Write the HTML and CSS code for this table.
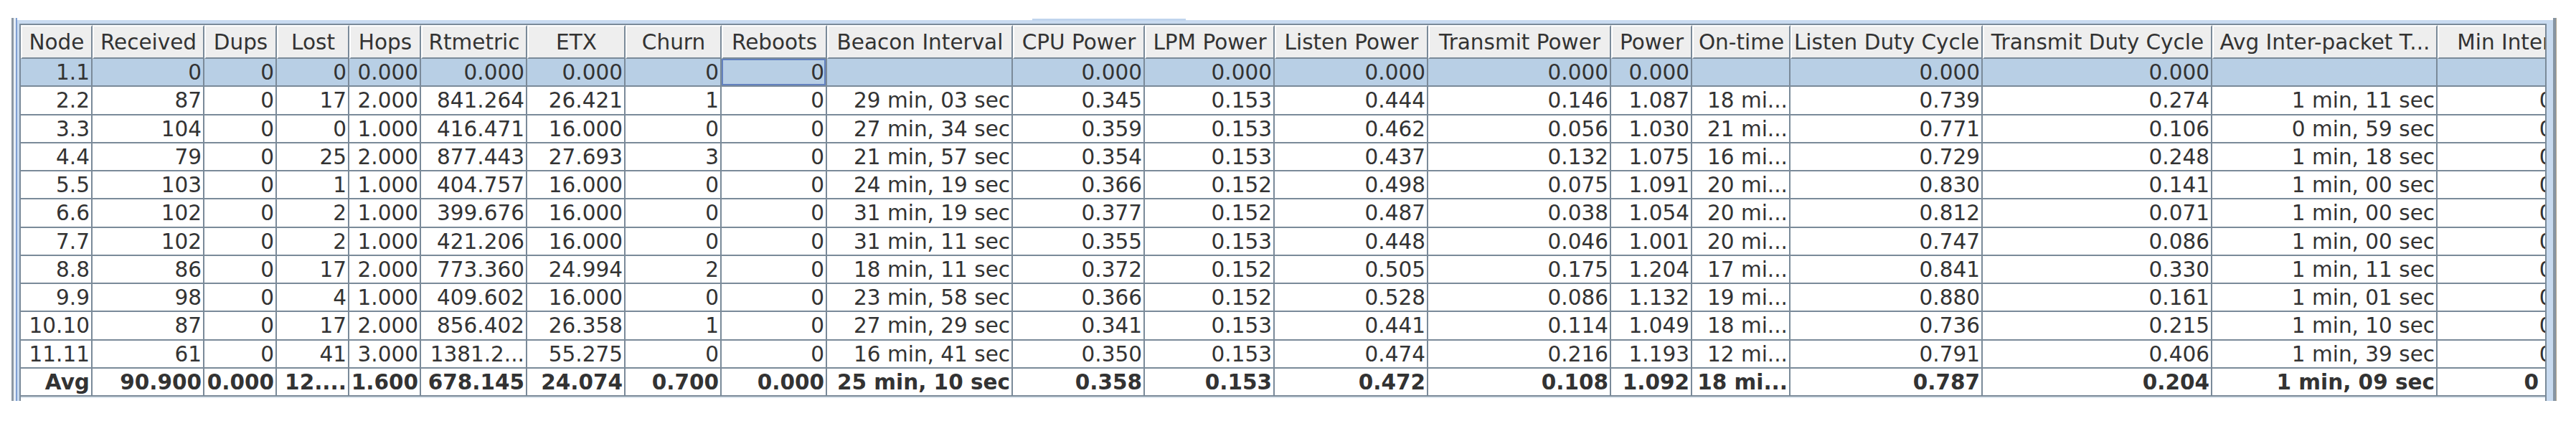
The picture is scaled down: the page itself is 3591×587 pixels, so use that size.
FILE: index.html
```html
<!DOCTYPE html>
<html>
<head>
<meta charset="utf-8">
<title>Node statistics</title>
<link rel="stylesheet" href="styles.css">
</head>
<body>
<div class="frame">
  <div class="edge-grey"></div>
  <div class="edge-light"></div>
  <div class="edge-blue"></div>
  <div class="inner">
    <div class="band"><div class="band-mark"></div></div>
    <div class="body-row">
      <div class="scroll">
        <div class="grid">
          <div class="row head">
            <div class="h">Node</div><div class="h">Received</div><div class="h">Dups</div><div class="h">Lost</div><div class="h">Hops</div><div class="h">Rtmetric</div><div class="h">ETX</div><div class="h">Churn</div><div class="h">Reboots</div><div class="h">Beacon Interval</div><div class="h">CPU Power</div><div class="h">LPM Power</div><div class="h">Listen Power</div><div class="h">Transmit Power</div><div class="h">Power</div><div class="h">On-time</div><div class="h">Listen Duty Cycle</div><div class="h">Transmit Duty Cycle</div><div class="h">Avg Inter-packet T...</div><div class="h">Min Inter-packet T...</div>
          </div>
          <div class="row sel">
            <div class="c">1.1</div><div class="c">0</div><div class="c">0</div><div class="c">0</div><div class="c">0.000</div><div class="c">0.000</div><div class="c">0.000</div><div class="c">0</div><div class="c focus">0</div><div class="c"></div><div class="c">0.000</div><div class="c">0.000</div><div class="c">0.000</div><div class="c">0.000</div><div class="c">0.000</div><div class="c"></div><div class="c">0.000</div><div class="c">0.000</div><div class="c"></div><div class="c"></div>
          </div>
          <div class="row">
            <div class="c">2.2</div><div class="c">87</div><div class="c">0</div><div class="c">17</div><div class="c">2.000</div><div class="c">841.264</div><div class="c">26.421</div><div class="c">1</div><div class="c">0</div><div class="c">29 min, 03 sec</div><div class="c">0.345</div><div class="c">0.153</div><div class="c">0.444</div><div class="c">0.146</div><div class="c">1.087</div><div class="c">18 mi...</div><div class="c">0.739</div><div class="c">0.274</div><div class="c">1 min, 11 sec</div><div class="c">0 min, 56 sec</div>
          </div>
          <div class="row">
            <div class="c">3.3</div><div class="c">104</div><div class="c">0</div><div class="c">0</div><div class="c">1.000</div><div class="c">416.471</div><div class="c">16.000</div><div class="c">0</div><div class="c">0</div><div class="c">27 min, 34 sec</div><div class="c">0.359</div><div class="c">0.153</div><div class="c">0.462</div><div class="c">0.056</div><div class="c">1.030</div><div class="c">21 mi...</div><div class="c">0.771</div><div class="c">0.106</div><div class="c">0 min, 59 sec</div><div class="c">0 min, 55 sec</div>
          </div>
          <div class="row">
            <div class="c">4.4</div><div class="c">79</div><div class="c">0</div><div class="c">25</div><div class="c">2.000</div><div class="c">877.443</div><div class="c">27.693</div><div class="c">3</div><div class="c">0</div><div class="c">21 min, 57 sec</div><div class="c">0.354</div><div class="c">0.153</div><div class="c">0.437</div><div class="c">0.132</div><div class="c">1.075</div><div class="c">16 mi...</div><div class="c">0.729</div><div class="c">0.248</div><div class="c">1 min, 18 sec</div><div class="c">0 min, 57 sec</div>
          </div>
          <div class="row">
            <div class="c">5.5</div><div class="c">103</div><div class="c">0</div><div class="c">1</div><div class="c">1.000</div><div class="c">404.757</div><div class="c">16.000</div><div class="c">0</div><div class="c">0</div><div class="c">24 min, 19 sec</div><div class="c">0.366</div><div class="c">0.152</div><div class="c">0.498</div><div class="c">0.075</div><div class="c">1.091</div><div class="c">20 mi...</div><div class="c">0.830</div><div class="c">0.141</div><div class="c">1 min, 00 sec</div><div class="c">0 min, 56 sec</div>
          </div>
          <div class="row">
            <div class="c">6.6</div><div class="c">102</div><div class="c">0</div><div class="c">2</div><div class="c">1.000</div><div class="c">399.676</div><div class="c">16.000</div><div class="c">0</div><div class="c">0</div><div class="c">31 min, 19 sec</div><div class="c">0.377</div><div class="c">0.152</div><div class="c">0.487</div><div class="c">0.038</div><div class="c">1.054</div><div class="c">20 mi...</div><div class="c">0.812</div><div class="c">0.071</div><div class="c">1 min, 00 sec</div><div class="c">0 min, 55 sec</div>
          </div>
          <div class="row">
            <div class="c">7.7</div><div class="c">102</div><div class="c">0</div><div class="c">2</div><div class="c">1.000</div><div class="c">421.206</div><div class="c">16.000</div><div class="c">0</div><div class="c">0</div><div class="c">31 min, 11 sec</div><div class="c">0.355</div><div class="c">0.153</div><div class="c">0.448</div><div class="c">0.046</div><div class="c">1.001</div><div class="c">20 mi...</div><div class="c">0.747</div><div class="c">0.086</div><div class="c">1 min, 00 sec</div><div class="c">0 min, 56 sec</div>
          </div>
          <div class="row">
            <div class="c">8.8</div><div class="c">86</div><div class="c">0</div><div class="c">17</div><div class="c">2.000</div><div class="c">773.360</div><div class="c">24.994</div><div class="c">2</div><div class="c">0</div><div class="c">18 min, 11 sec</div><div class="c">0.372</div><div class="c">0.152</div><div class="c">0.505</div><div class="c">0.175</div><div class="c">1.204</div><div class="c">17 mi...</div><div class="c">0.841</div><div class="c">0.330</div><div class="c">1 min, 11 sec</div><div class="c">0 min, 57 sec</div>
          </div>
          <div class="row">
            <div class="c">9.9</div><div class="c">98</div><div class="c">0</div><div class="c">4</div><div class="c">1.000</div><div class="c">409.602</div><div class="c">16.000</div><div class="c">0</div><div class="c">0</div><div class="c">23 min, 58 sec</div><div class="c">0.366</div><div class="c">0.152</div><div class="c">0.528</div><div class="c">0.086</div><div class="c">1.132</div><div class="c">19 mi...</div><div class="c">0.880</div><div class="c">0.161</div><div class="c">1 min, 01 sec</div><div class="c">0 min, 55 sec</div>
          </div>
          <div class="row">
            <div class="c">10.10</div><div class="c">87</div><div class="c">0</div><div class="c">17</div><div class="c">2.000</div><div class="c">856.402</div><div class="c">26.358</div><div class="c">1</div><div class="c">0</div><div class="c">27 min, 29 sec</div><div class="c">0.341</div><div class="c">0.153</div><div class="c">0.441</div><div class="c">0.114</div><div class="c">1.049</div><div class="c">18 mi...</div><div class="c">0.736</div><div class="c">0.215</div><div class="c">1 min, 10 sec</div><div class="c">0 min, 56 sec</div>
          </div>
          <div class="row">
            <div class="c">11.11</div><div class="c">61</div><div class="c">0</div><div class="c">41</div><div class="c">3.000</div><div class="c">1381.2...</div><div class="c">55.275</div><div class="c">0</div><div class="c">0</div><div class="c">16 min, 41 sec</div><div class="c">0.350</div><div class="c">0.153</div><div class="c">0.474</div><div class="c">0.216</div><div class="c">1.193</div><div class="c">12 mi...</div><div class="c">0.791</div><div class="c">0.406</div><div class="c">1 min, 39 sec</div><div class="c">0 min, 58 sec</div>
          </div>
          <div class="row avg">
            <div class="c">Avg</div><div class="c">90.900</div><div class="c">0.000</div><div class="c">12....</div><div class="c">1.600</div><div class="c">678.145</div><div class="c">24.074</div><div class="c">0.700</div><div class="c">0.000</div><div class="c">25 min, 10 sec</div><div class="c">0.358</div><div class="c">0.153</div><div class="c">0.472</div><div class="c">0.108</div><div class="c">1.092</div><div class="c">18 mi...</div><div class="c">0.787</div><div class="c">0.204</div><div class="c">1 min, 09 sec</div><div class="c">0 min, 56 sec</div>
          </div>
        </div>
        <div class="foot"></div>
      </div>
    </div>
  </div>
  <div class="edge-r1"></div>
  <div class="edge-r2"></div>
</div>
</body>
</html>
```

FILE: styles.css
```css
html, body {
  margin: 0;
  background: #ffffff;
}

body {
  font-family: "DejaVu Sans", "Liberation Sans", sans-serif;
  font-size: 29.5px;
  color: #333333;
}

.frame {
  display: flex;
  width: 3548px;
  height: 534px;
  margin: 25px 0 0 16px;
}

.edge-grey {
  width: 3px;
  background: #8c97a3;
}

.edge-light {
  width: 3px;
  background: #e6edf5;
}

.edge-blue {
  width: 2px;
  background: #7f9fd2;
}

.edge-r1 {
  width: 4px;
  background: #8795a3;
}

.edge-r2 {
  width: 1px;
  background: #b0a48f;
}

.inner {
  flex: 1;
  min-width: 0;
  display: flex;
  flex-direction: column;
  padding-top: 3px;
}

.band {
  height: 5px;
  background: #c9dbf0;
  display: flex;
  align-items: flex-start;
}

.band-mark {
  margin-left: 1415px;
  margin-top: -2px;
  width: 214px;
  height: 3px;
  background: #bfd4ed;
}

.body-row {
  flex: 1;
  min-height: 0;
  display: flex;
  background: #c9dbf0;
  padding: 0 9px 0 3px;
}

.scroll {
  flex: 1;
  min-width: 0;
  overflow: hidden;
  background: #ffffff;
  border: 2px solid #7a8a99;
  border-bottom: 0;
}

.grid {
  display: grid;
  grid-template-columns: 100px 156px 101px 101px 100px 148px 137px 134px 147px 259px 184px 181px 214px 255px 113px 137px 268px 320px 314px 345px;
  grid-template-rows: 47px repeat(12, 39.25px);
}

.row {
  display: contents;
}

.h {
  box-sizing: border-box;
  background: #eeeeee;
  border-top: 2px solid #ffffff;
  border-left: 2px solid #ffffff;
  border-right: 2px solid #7a8a99;
  border-bottom: 2px solid #7a8a99;
  text-align: center;
  padding-top: 2px;
  line-height: 41px;
  white-space: nowrap;
  overflow: hidden;
}

.c {
  box-sizing: border-box;
  border-right: 2px solid #7a8a99;
  border-bottom: 2px solid #7a8a99;
  text-align: right;
  padding: 1px 2px 0 0;
  line-height: 36.25px;
  white-space: nowrap;
  overflow: hidden;
}

.sel > .c {
  background: #b8cfe5;
}

.focus {
  box-shadow: inset 0 0 0 2px #6382bf;
}

.avg > .c {
  font-weight: bold;
}

.foot {
  height: 2px;
  background: #dde5ed;
}
```
